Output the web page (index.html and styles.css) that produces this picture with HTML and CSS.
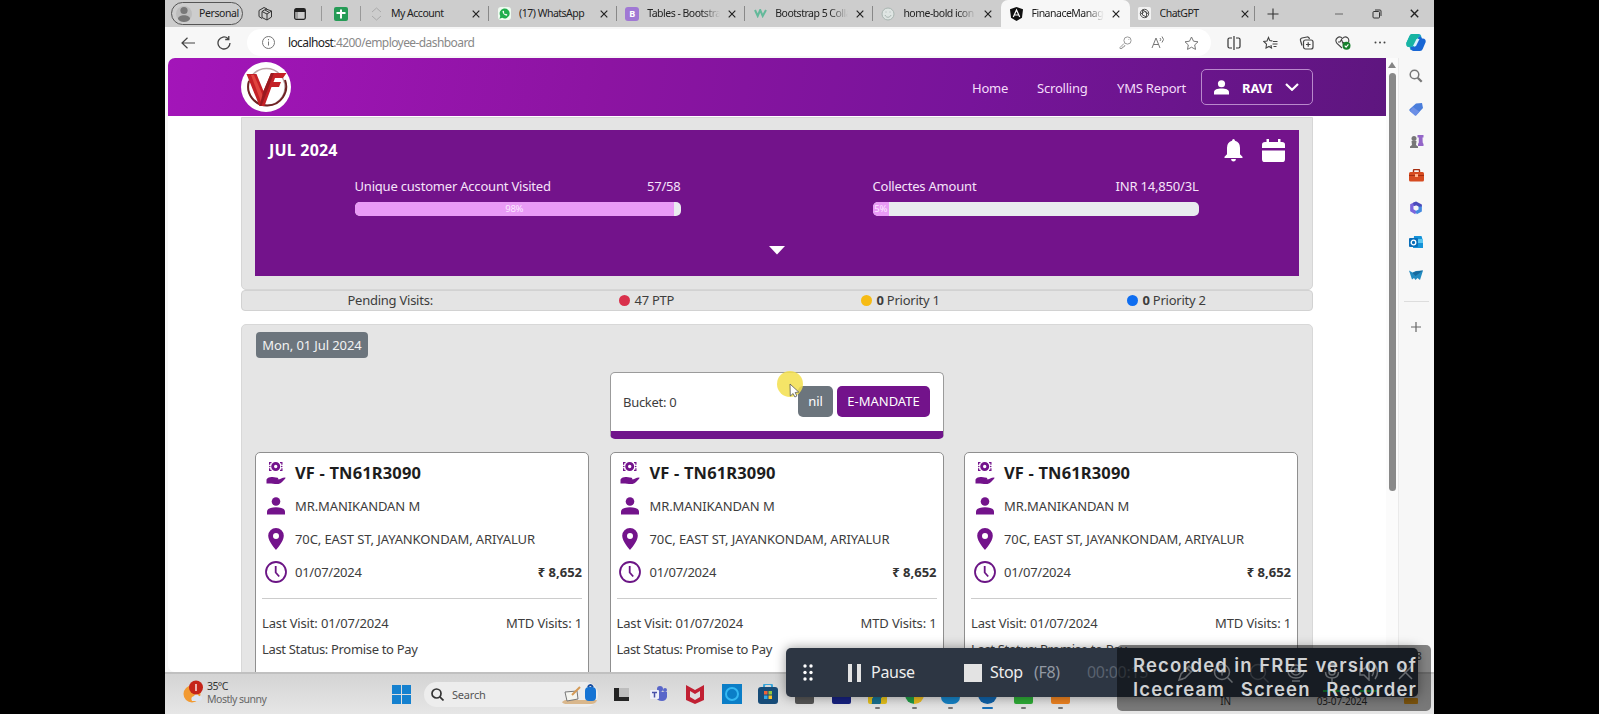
FILE: index.html
```html
<!DOCTYPE html>
<html lang="en">
<head>
<meta charset="utf-8">
<title>FinanaceManagement</title>
<link rel="stylesheet" href="styles.css">
</head>
<body>
<svg class="defs" aria-hidden="true">
  <symbol id="x" viewBox="0 0 8 8"><path d="M.7.7l6.6 6.6M7.3.7L.7 7.3" stroke="#222" stroke-width="1.2" fill="none"/></symbol>
  <symbol id="person" viewBox="0 0 18 18"><circle cx="9" cy="4.5" r="4.3"/><path d="M0 17.5v-2.8C0 11.500 4 10.200 9 10.200s9 1.300 9 4.500v2.800z"/></symbol>
  <symbol id="pin" viewBox="0 0 16 22"><path fill-rule="evenodd" d="M8 0a7.800 7.800 0 0 0-7.800 7.800C.2 13.500 8 22 8 22s7.800-8.500 7.800-14.200A7.800 7.800 0 0 0 8 0zm0 5a3 3 0 1 1 0 6 3 3 0 0 1 0-6z"/></symbol>
  <symbol id="clock" viewBox="0 0 22 22"><circle cx="11" cy="11" r="10" fill="none" stroke="#6b1585" stroke-width="1.800"/><path d="M10.700 5v6.500l3.500 4" fill="none" stroke="#6b1585" stroke-width="1.800"/></symbol>
  <symbol id="hand" viewBox="0 0 20 24"><path d="M3 1h2.500v1.200H4.200v1.600H3zM16.500 1H14v1.200h1.300v1.600h1.200zM3 10h2.500V8.800H4.200V7.200H3zM16.500 10H14V8.800h1.300V7.200h1.200z"/><path fill-rule="evenodd" d="M9.700 1a4.500 4.500 0 1 1 0 9 4.500 4.500 0 0 1 0-9zm0 2.800a1.700 1.700 0 1 0 0 3.400 1.700 1.700 0 0 0 0-3.400z"/><circle cx="3.800" cy="5.500" r=".8"/><circle cx="15.700" cy="5.500" r=".8"/><path d="M.5 18.500c1.500-2.200 3.500-2.700 6-2.500l5 .8c1 .2 1 1.400 0 1.500 2.500.3 4.500-2 7.700-1.900.6.400.2 1-.3 1.500-2 2-3.500 4.600-6.400 5-3 .6-7-.8-12-.3z"/></symbol>
</svg>
<div class="desktop">

  <div class="tabstrip">
    <div class="profile"><svg width="18" height="18" viewBox="0 0 18 18"><circle cx="9" cy="9" r="8" fill="#bdbdbd"/><circle cx="9" cy="5.500" r="3.600" fill="#787878"/><path d="M3 14c0-5 12-5 12 0-2 4-10 4-12 0z" fill="#787878"/></svg><span>Personal</span></div>
    <div class="strip-icon s1"><svg width="15" height="15" viewBox="0 0 15 15" fill="none" stroke="#333"><path d="M1 4.500l5-3 3 1.500M1 4.500v6l3 2M4 5.500l4-2.500 5.500 2v6L9 14l-5-2.500zM4 5.500l5 2.500v6M9 8l4.500-3M7 4l4 2.300"/></svg></div>
    <div class="strip-icon s2"><svg width="12" height="12" viewBox="0 0 12 12"><rect x=".7" y=".7" width="10.600" height="10.600" rx="1.500" fill="none" stroke="#222" stroke-width="1.300"/><path d="M1 1h10v3H1z" fill="#222"/><path d="M3 4v7" stroke="#777"/></svg></div>
    <div class="strip-icon s3"><svg width="14" height="14" viewBox="0 0 14 14"><rect width="14" height="14" rx="2" fill="#259b56"/><path d="M7 2.500v9M2.500 6h9" stroke="#fff" stroke-width="2"/></svg></div>
    <div class="tab"><i class="fav"><svg width="13" height="14" viewBox="0 0 13 14" fill="none" stroke="#aaa"><path d="M2 5l4.500-4L11 5M2 9l4.500 4L11 9"/></svg></i><span class="t">My Account</span><svg class="close"><use href="#x"/></svg></div>
    <div class="tab"><i class="fav"><svg width="13" height="13" viewBox="0 0 13 13"><rect width="13" height="13" rx="3" fill="#eefbf0"/><path d="M1.500 11.700l.8-2.800a5 5 0 1 1 1.900 1.900z" fill="#1fae4d"/><path d="M4.500 4c0 2.500 2 4.600 4.500 4.700l.3-1.300-1.500-.6-.6.500C6.500 7 6 6.400 5.800 5.800l.5-.6-.6-1.400z" fill="#fff"/></svg></i><span class="t">(17) WhatsApp</span><svg class="close"><use href="#x"/></svg></div>
    <div class="tab"><i class="fav"><b class="bs">B</b></i><span class="t fade">Tables - Bootstrap</span><svg class="close"><use href="#x"/></svg></div>
    <div class="tab"><i class="fav"><svg width="13" height="9" viewBox="0 0 13 9" fill="none" stroke="#63b99a" stroke-width="2"><path d="M1 1l2.700 6 2.500-6 2.500 6L12 1"/></svg></i><span class="t fade">Bootstrap 5 Colla</span><svg class="close"><use href="#x"/></svg></div>
    <div class="tab noline"><i class="fav"><svg width="14" height="14" viewBox="0 0 14 14" fill="none" stroke="#a9b5b1"><circle cx="7" cy="7" r="6" fill="#dfe5e3"/><path d="M4 8c1 3 5 3 6 0M4.500 5h1M8.500 5h1"/></svg></i><span class="t fade">home-bold icon</span><svg class="close"><use href="#x"/></svg></div>
    <div class="tab active"><i class="fav"><svg width="13" height="14" viewBox="0 0 13 14"><path d="M6.500 0L13 2.300l-1 8.400L6.500 14 1 10.700 0 2.300z" fill="#111"/><path d="M3.300 10l3.200-7 3.200 7M4.600 8h3.800" stroke="#fff" stroke-width="1.200" fill="none"/></svg></i><span class="t fade">FinanaceManagem</span><svg class="close"><use href="#x"/></svg></div>
    <div class="tab last"><i class="fav"><svg width="13" height="13" viewBox="0 0 13 13" fill="none"><rect width="13" height="13" rx="1.500" fill="#f2f2f2"/><g stroke="#555"><circle cx="6.500" cy="6.500" r="4.200"/><path d="M4.500 3v5l4 2M8.500 10V5l-4-2M2.600 7l4-2.500 4 2.500"/></g></svg></i><span class="t">ChatGPT</span><svg class="close"><use href="#x"/></svg></div>
    <div class="newtab"><svg width="12" height="12" viewBox="0 0 12 12" stroke="#333" stroke-width="1.100"><path d="M6 .5v11M.5 6h11"/></svg></div>
    <div class="winbtns">
      <svg width="10" height="10" viewBox="0 0 10 10" stroke="#666"><path d="M1 5h8"/></svg>
      <svg width="10" height="10" viewBox="0 0 10 10" stroke="#333" fill="none"><rect x="1" y="2.500" width="6.500" height="6.500" rx="1"/><path d="M3 1h5q1 0 1 1v5"/></svg>
      <svg width="9" height="9" viewBox="0 0 8 8"><use href="#x"/></svg>
    </div>
  </div>

  <div class="toolbar">
    <div class="nav-ic"><svg width="14" height="12" viewBox="0 0 14 12" fill="none" stroke="#444" stroke-width="1.200"><path d="M14 6H1M6.500 .8L1 6l5.500 5.200"/></svg></div>
    <div class="nav-ic"><svg width="14" height="14" viewBox="0 0 14 14" fill="none" stroke="#444" stroke-width="1.300"><path d="M13 7a6 6 0 1 1-2-4.500M11.800 0v3.500H8.200"/></svg></div>
    <div class="address">
      <svg width="13" height="13" viewBox="0 0 13 13" fill="none" stroke="#777"><circle cx="6.500" cy="6.500" r="6"/><path d="M6.500 5.500v4M6.500 3v1.300"/></svg>
      <span class="url"><b>localhost</b>:4200/employee-dashboard</span>
      <div class="addr-ic">
        <svg width="13" height="13" viewBox="0 0 13 13" fill="none" stroke="#999"><path d="M5 7.500L1 11.500V12.500h2l.5-1.500H5L6 9"/><circle cx="8.500" cy="4.500" r="3.600"/><path d="M9.500 3.500h.7"/></svg>
        <svg width="14" height="13" viewBox="0 0 14 13" fill="none" stroke="#777"><path d="M1 12L5 2l4 10M2.500 8.500h5M9 2q1.500 1.500 0 3M11 .5q3 3 0 6"/></svg>
        <svg width="15" height="14" viewBox="0 0 15 14" fill="none" stroke="#777"><path d="M7.500 1l2 4.200 4.500.6-3.300 3.100.8 4.500-4-2.200-4 2.200.8-4.500L1 5.800l4.500-.6z"/></svg>
      </div>
    </div>
    <div class="tools">
      <svg width="14" height="14" viewBox="0 0 14 14" fill="none" stroke="#333" stroke-width="1.200"><path d="M5 2H2.500Q1 2 1 3.500v7Q1 12 2.500 12H5M7 0v14M9 2h2.500Q13 2 13 3.500v7q0 1.500-1.500 1.500H9"/></svg>
      <svg width="15" height="14" viewBox="0 0 15 14" fill="none" stroke="#444" stroke-width="1.100"><path d="M9.500 5L6.800 4.600 5.500 1.500 4 5 .8 5.500l2.700 2.700L3 12l3-1.500 2.500 1.500-.5-3M10 5.500h4.500M9.500 8h5M10.500 10.500h3"/></svg>
      <svg width="15" height="14" viewBox="0 0 15 14" fill="none" stroke="#444" stroke-width="1.200"><path d="M3 9.500L1.500 4.500Q1 2.500 3 2l5-1q2-.3 2.500 2"/><rect x="4.500" y="4" width="9.500" height="9" rx="2"/><path d="M9.200 6.300v4.500M7 8.500h4.500"/></svg>
      <svg width="16" height="14" viewBox="0 0 16 14" fill="none" stroke="#444" stroke-width="1.100"><path d="M7 12L2 7.500Q-.5 4 2.500 1.700 5-.3 7.500 2.500 10-.3 12.500 1.700 14.500 3.500 13.500 6M3 6h2l1.500-2.500L8 7.500 9 6"/><circle cx="11.500" cy="9.700" r="4" fill="#16802c" stroke="none"/><path d="M9.700 9.700l1.400 1.500 2.300-2.800" stroke="#fff"/></svg>
      <svg width="12" height="3" viewBox="0 0 12 3" fill="#444"><circle cx="1.500" cy="1.500" r="1"/><circle cx="6" cy="1.500" r="1"/><circle cx="10.500" cy="1.500" r="1"/></svg>
      <svg width="20" height="19" viewBox="0 0 20 19"><path d="M6 1h7q1.500 0 2 1.500l.8 3H11L8 15.500Q7.500 17 6 17H4.500L3.500 14Q0 14 .3 10L3.500 3Q4.300 1 6 1z" fill="#1fa7c4"/><path d="M14 18H7.500Q5.500 18 5 16l-.5-2H9L12.300 5Q13 3.500 14.500 3.500l1.500 2Q20 5 19.700 9l-3 7Q16 18 14 18z" fill="#1866d4"/><path d="M6 1h5q1.500 0 2 1.500l-6 10L2 14Q0 13 .3 10L3.500 3Q4.300 1 6 1z" fill="#17b5a2"/><path d="M10.500 6h3l-3.500 7H7z" fill="#d9f4fb"/></svg>
    </div>
  </div>

  <div class="main">
    <div class="page">
      <nav class="navbar">
        <svg class="logo" width="50" height="50" viewBox="0 0 50 50"><circle cx="25" cy="25" r="25" fill="#fff"/><circle cx="25.500" cy="25" r="18.500" fill="none" stroke="#b9a5a8" stroke-width="1.500"/><path d="M8 19a19 19 0 1 0 36-1" fill="none" stroke="#6e2222" stroke-width="2"/><path d="M5.500 12h10l7 17L30 11h15.500l-3.500 5h-8l-1.500 4h7.500l-2 5h-7.500L23.500 44h-5z" fill="#c42127"/><path d="M13 13l9 21-2 6-10-27z" fill="#e0453f"/><path d="M22.500 29L30 11h3L20.500 44h-2z" fill="#981a20"/></svg>
        <a class="n1">Home</a><a class="n2">Scrolling</a><a class="n3">YMS Report</a>
        <button class="user"><svg width="15" height="15" fill="#fff"><use href="#person"/></svg><b>RAVI</b><svg width="14" height="8" viewBox="0 0 14 8" fill="none" stroke="#fff" stroke-width="2.200"><path d="M1 1l6 5.800L13 1"/></svg></button>
      </nav>

      <div class="content">
        <section class="summary">
          <div class="panel">
            <div class="panel-head"><h1>JUL 2024</h1>
              <svg class="bell" width="19" height="23" viewBox="0 0 19 23" fill="#fff"><path d="M9.500 0q1.300 0 1.500 1.800 5 1.400 5 7v6.500l2.500 2.500v1.200H.5v-1.200L3 15.300V8.800q0-5.600 5-7Q8.200 0 9.500 0zM7 20h5q-.3 2.500-2.500 2.500T7 20z"/></svg>
              <svg class="cal" width="23" height="23" viewBox="0 0 23 24" preserveAspectRatio="none" fill="#fff"><path d="M4.500 0H7v3h9V0h2.500v3H20q3 0 3 3v3.500H0V6q0-3 3-3h1.500zM0 12h23v9q0 3-3 3H3q-3 0-3-3z"/></svg>
            </div>
            <div class="meters">
              <div class="meter"><div class="lbl"><span>Unique customer Account Visited</span><span>57/58</span></div><div class="bar"><div class="fill" style="width:98%">98%</div></div></div>
              <div class="meter"><div class="lbl"><span>Collectes Amount</span><span>INR 14,850/3L</span></div><div class="bar"><div class="fill" style="width:5%">5%</div></div></div>
            </div>
            <svg class="caret" width="16" height="9" viewBox="0 0 16 9" fill="#fff"><path d="M0 0h16L8 8.500z"/></svg>
          </div>
        </section>
        <section class="pending">
          <span class="p0">Pending Visits:</span>
          <span class="p1"><i class="dot red"></i>47 PTP</span>
          <span class="p2"><i class="dot yellow"></i><b>0</b> Priority 1</span>
          <span class="p3"><i class="dot blue"></i><b>0</b> Priority 2</span>
        </section>
        <section class="visits">
          <span class="date">Mon, 01 Jul 2024</span>
          <div class="bucket"><span class="bk">Bucket: 0</span><span class="btn gray">nil</span><span class="btn violet">E-MANDATE</span></div>
          <div class="cards">
            <article class="card">
              <div class="row"><svg width="20" height="24"><use href="#hand"/></svg><h2>VF - TN61R3090</h2></div>
              <div class="row"><svg width="18" height="18"><use href="#person"/></svg><span class="up">MR.MANIKANDAN M</span></div>
              <div class="row"><svg width="16" height="22"><use href="#pin"/></svg><span class="up">70C, EAST ST, JAYANKONDAM, ARIYALUR</span></div>
              <div class="row"><svg width="22" height="22"><use href="#clock"/></svg><span class="due">01/07/2024</span><b>₹ 8,652</b></div>
              <hr>
              <div class="foot"><span>Last Visit: 01/07/2024</span><span>MTD Visits: 1</span></div>
              <div class="foot status"><span>Last Status: Promise to Pay</span></div>
            </article>
            <article class="card">
              <div class="row"><svg width="20" height="24"><use href="#hand"/></svg><h2>VF - TN61R3090</h2></div>
              <div class="row"><svg width="18" height="18"><use href="#person"/></svg><span class="up">MR.MANIKANDAN M</span></div>
              <div class="row"><svg width="16" height="22"><use href="#pin"/></svg><span class="up">70C, EAST ST, JAYANKONDAM, ARIYALUR</span></div>
              <div class="row"><svg width="22" height="22"><use href="#clock"/></svg><span class="due">01/07/2024</span><b>₹ 8,652</b></div>
              <hr>
              <div class="foot"><span>Last Visit: 01/07/2024</span><span>MTD Visits: 1</span></div>
              <div class="foot status"><span>Last Status: Promise to Pay</span></div>
            </article>
            <article class="card">
              <div class="row"><svg width="20" height="24"><use href="#hand"/></svg><h2>VF - TN61R3090</h2></div>
              <div class="row"><svg width="18" height="18"><use href="#person"/></svg><span class="up">MR.MANIKANDAN M</span></div>
              <div class="row"><svg width="16" height="22"><use href="#pin"/></svg><span class="up">70C, EAST ST, JAYANKONDAM, ARIYALUR</span></div>
              <div class="row"><svg width="22" height="22"><use href="#clock"/></svg><span class="due">01/07/2024</span><b>₹ 8,652</b></div>
              <hr>
              <div class="foot"><span>Last Visit: 01/07/2024</span><span>MTD Visits: 1</span></div>
              <div class="foot status"><span>Last Status: Promise to Pay</span></div>
            </article>
          </div>
        </section>
      </div>
    </div>
    <div class="scroll"><svg width="8" height="6" viewBox="0 0 8 6" fill="#858585"><path d="M4 0l4 6H0z"/></svg><div class="thumb"></div></div>
    <aside class="side">
      <svg width="14" height="14" viewBox="0 0 14 14" fill="none" stroke="#777"><circle cx="5.500" cy="5.500" r="4.300" stroke-width="1.500"/><path d="M8.700 8.700l4 4" stroke-width="2.300"/></svg>
      <svg width="14" height="14" viewBox="0 0 14 14"><path d="M7 1.500l6-.5 1 5-6.500 7q-1 1-2 0L.8 9q-1-1 0-2z" fill="#4b7edb"/><path d="M.8 9l4.700 4q1 1 2 0l3-3.200L4 5z" fill="#6c8fe6"/></svg>
      <svg width="15" height="15" viewBox="0 0 15 15"><circle cx="5" cy="4.500" r="2.500" fill="#777"/><path d="M2.500 7h5L7 11l2 1.500V14H1v-1.500L3 11z" fill="#777"/><path d="M8.500 1h6v2.500h-1l.2 5 .8 1.500v2H9v-2l.8-1.500V3.500H8.500z" fill="#9466c8"/></svg>
      <svg width="15" height="13" viewBox="0 0 15 13"><path d="M4.500 3V1.500Q4.500.5 5.500.5h4q1 0 1 1V3" fill="none" stroke="#a52d10" stroke-width="1.400"/><rect y="3" width="15" height="9.500" rx="1.500" fill="#d64b20"/><path d="M0 6.500h15" stroke="#a52d10"/><rect x="6" y="5" width="3" height="3" fill="#ffb38d"/></svg>
      <svg width="14" height="14" viewBox="0 0 14 14" fill="none" stroke-width="3.300"><path d="M7 2.300l-4.200 2v5L7 11.700" stroke="#7b65dd"/><path d="M7 11.700l4.200-2.200v-5" stroke="#4389df"/><path d="M11.200 5.500v-1L7 2.300 4.500 3.400" stroke="#4b4bbb"/></svg>
      <svg width="14" height="14" viewBox="0 0 14 14"><path d="M5 1h7.500l1.500 5v7H4z" fill="#1593d8"/><path d="M9 4h5v4H9z" fill="#5cc6f0"/><rect y="3" width="9" height="9" rx="1" fill="#096eb9"/><circle cx="4.500" cy="7.500" r="2.300" fill="none" stroke="#fff" stroke-width="1.300"/></svg>
      <svg width="14" height="12" viewBox="0 0 14 12"><path d="M0 1.500l3.500 2 3.500-1.500 7-.5-3 9.500-2.500-2-2 2L5 9l-2 1.500z" fill="#228bc1"/><path d="M3.500 4l3 3L14 1.500 7 2.500z" fill="#17699d"/></svg>
      <div class="side-line"></div>
      <svg width="10" height="10" viewBox="0 0 10 10" stroke="#666" stroke-width="1.200"><path d="M5 0v10M0 5h10"/></svg>
    </aside>
  </div>

  <div class="taskbar">
    <div class="weather"><svg width="22" height="24" viewBox="0 0 22 24"><circle cx="10" cy="14" r="8.500" fill="#f29a32"/><path d="M10 21q-2-4 2-5 2-4 5 0 4 0 3 3-1 2-4 2z" fill="#dce5f2"/><circle cx="14" cy="7.500" r="7" fill="#c52419"/><path d="M14 4v7" stroke="#fff" stroke-width="1.300"/></svg><div><span>35°C</span><span class="ms">Mostly sunny</span></div></div>
    <svg class="win" width="19" height="19" viewBox="0 0 19 19" fill="#1581cf"><path d="M0 0h9v9H0zM10 0h9v9h-9zM0 10h9v9H0zM10 10h9v9h-9z"/></svg>
    <div class="search"><svg width="13" height="13" viewBox="0 0 13 13" fill="none" stroke="#333" stroke-width="1.700"><circle cx="5.500" cy="5.500" r="4.500"/><path d="M8.800 8.800l3.700 3.700"/></svg><span>Search</span><svg width="36" height="20" viewBox="0 0 36 20"><path d="M0 18q3-3 8-2h27q-1 4-6 4H5q-4 0-5-2z" fill="#d9b78c"/><path d="M3 8l12-1 1 8-11 2z" fill="#f5f5f0" stroke="#777"/><path d="M10 11l8-8" stroke="#d59a55" stroke-width="2"/><rect x="23" y="3" width="11" height="14" rx="4" fill="#1674d4"/><path d="M26 3q2-4 5 0" stroke="#174c9c" fill="none" stroke-width="2"/></svg></div>
    <div class="apps">
      <svg width="18" height="18" viewBox="0 0 18 18"><path d="M1 3h6v6h9v7H1z" fill="#242424"/><path d="M6 3h10v9H6z" fill="#bdbdbd"/></svg>
      <svg width="18" height="18" viewBox="0 0 18 18"><circle cx="10" cy="4" r="3" fill="#5966c9"/><circle cx="15" cy="5" r="2" fill="#5966c9"/><path d="M6 7h11v5q-1 4-5 4-5 0-6-4z" fill="#5966c9"/><rect y="5" width="9" height="9" rx="1" fill="#eceef9"/><path d="M2 7.500h5M4.500 7.500v5" stroke="#4750a8" stroke-width="1.500"/></svg>
      <svg width="18" height="19" viewBox="0 0 18 19"><path d="M0 0l9 5 9-5v15l-9 4-9-4zM4 6v6l5 3 5-3V6L9 9z" fill="#c12033" fill-rule="evenodd"/></svg>
      <svg width="20" height="20" viewBox="0 0 20 20"><rect width="20" height="20" fill="#0b7ec7"/><circle cx="10" cy="10" r="6" fill="none" stroke="#35b8f2" stroke-width="2"/></svg>
      <svg width="20" height="20" viewBox="0 0 20 20"><path d="M6 4V2q0-2 2-2h4q2 0 2 2v2" fill="none" stroke="#38a5d9" stroke-width="2"/><rect y="3" width="20" height="17" rx="3" fill="#174c78"/><path d="M6 7h3.500v3.500H6z" fill="#ef6339"/><path d="M10.500 7H14v3.500h-3.500z" fill="#92c63f"/><path d="M6 11.500h3.500V15H6z" fill="#32a8e8"/><path d="M10.500 11.500H14V15h-3.500z" fill="#f9c229"/></svg>
      <i class="app a1"></i><i class="app a2"></i><i class="app a3 run"></i><i class="app a4 run"></i><i class="app a5 run"></i><i class="app a6 run on"></i><i class="app a7 run"></i><i class="app a8 run"></i>
    </div>
    <div class="tray"><span>IN</span><span>03-07-2024</span><i class="badge"></i></div>
  </div>
</div>

<svg class="pointer" width="28" height="32" viewBox="0 0 28 32"><circle cx="13" cy="13" r="13" fill="#f3df4c" fill-opacity=".85"/><path d="M13 13l.3 12 2.800-2.500 1.800 3.500 2-1-1.700-3.500 3.500-.5z" fill="#fff" stroke="#555" stroke-width=".8"/></svg>

<div class="recorder">
  <svg class="grip" width="10" height="17" viewBox="0 0 10 17" fill="#fff"><circle cx="2" cy="2" r="1.700"/><circle cx="8" cy="2" r="1.700"/><circle cx="2" cy="8.500" r="1.700"/><circle cx="8" cy="8.500" r="1.700"/><circle cx="2" cy="15" r="1.700"/><circle cx="8" cy="15" r="1.700"/></svg>
  <svg class="pause" width="13" height="18" viewBox="0 0 13 18" fill="#e3e3e3"><path d="M0 0h4v18H0zM9 0h4v18H9z"/></svg>
  <span class="rp">Pause</span>
  <i class="stop"></i>
  <span class="rs">Stop</span><span class="f8">(F8)</span><span class="time">00:00:15</span>
  <div class="rec-tools">
    <svg width="18" height="18" viewBox="0 0 18 18"><path d="M2 16l2-6 8-8 4 4-8 8zM10 4l4 4M2 16l4-1"/></svg>
    <svg width="20" height="20" viewBox="0 0 20 20"><circle cx="9" cy="9" r="7.500"/><path d="M14.500 14.500l5 5M5.500 9h7M9 5.500v7"/></svg>
    <svg class="dim" width="20" height="20" viewBox="0 0 20 20"><circle cx="9" cy="9" r="7.500"/><path d="M14.500 14.500l5 5"/></svg>
    <svg width="20" height="18" viewBox="0 0 20 18"><circle cx="10" cy="6" r="5"/><circle cx="10" cy="6" r="1.500"/><path d="M2 8q1 6 8 6t8-6M6 17h8"/></svg>
    <div class="mic"><svg width="16" height="20" viewBox="0 0 16 20"><rect x="5" y="1" width="6" height="11" rx="3"/><path d="M1.500 9q0 6 6.500 6t6.500-6M8 15v4"/></svg><i class="level"></i></div>
    <div class="mic"><svg width="20" height="18" viewBox="0 0 20 18"><path d="M1 6h4l5-5v16l-5-5H1zM13 5q3 4 0 8M16 2q5 7 0 14"/></svg><i class="level"></i></div>
    <svg width="15" height="15" viewBox="0 0 15 15"><path d="M1 1l13 13M14 1L1 14"/></svg>
  </div>
</div>
<span class="clock-digit">8</span>
<div class="watermark"><span>Recorded in FREE version of</span><span>Icecream Screen Recorder</span></div>
</body>
</html>
```
FILE: styles.css
```css
* { box-sizing: border-box; }
body { margin: 0; width: 1599px; height: 714px; overflow: hidden; background: #000; position: relative; font-family: "Noto Sans", "Open Sans", sans-serif; font-size: 13px; color: #3d3d3d; white-space: nowrap; }
svg { display: block; flex: none; }
span, b, h1, h2, a, button, i { flex: none; }
.defs { width: 0; height: 0; position: absolute; }
.desktop { margin-left: 165px; width: 1269px; height: 714px; display: flex; flex-direction: column; background: #f7f7f7; overflow: hidden; }

/* browser tabs */
.tabstrip { height: 27px; background: #cdcdcd; display: flex; align-items: center; font-size: 10.500px; color: #222; flex: none; }
.tabstrip span { padding-bottom: 2px; }
.profile { margin-left: 6px; width: 72px; height: 23px; border: 1.500px solid #555; border-radius: 12px; display: flex; align-items: center; gap: 6px; padding-left: 3px; letter-spacing: -.4px; }
.strip-icon { display: flex; justify-content: center; width: 34px; }
.s1 { margin-left: 5px; }
.s2 { width: 36px; }
.s3 { width: 40px; height: 15px; margin-left: 3px; border: solid #999; border-width: 0 1px; align-items: center; }
.tab { width: 128.100px; height: 27px; display: flex; align-items: center; background: linear-gradient(#888, #888) right 6px / 1px 15px no-repeat; }
.tab.noline { background: none; }
.tab .fav { width: 30px; display: flex; justify-content: center; font-style: normal; }
.tab .t { width: 73px; overflow: hidden; letter-spacing: -.5px; }
.tab .fade { mask-image: linear-gradient(90deg, #000 75%, transparent); }
.close { width: 8px; height: 8px; margin-left: 8px; }
.tab.active { background: #f7f7f7; border-radius: 7px 7px 0 0; }
.tab.last { width: 125px; }
.bs { width: 14px; height: 14px; border-radius: 3px; background: #a078d4; color: #fff; font-size: 9px; line-height: 14px; text-align: center; }
.newtab { width: 36px; display: flex; justify-content: center; }
.winbtns { margin-left: 43px; display: flex; gap: 28px; align-items: center; }

/* address bar */
.toolbar { height: 31px; display: flex; align-items: center; padding-left: 5px; background: #f7f7f7; flex: none; }
.nav-ic { width: 36px; display: flex; justify-content: center; }
.address { margin-left: 5px; width: 966px; height: 27px; background: #fff; border-radius: 14px; display: flex; align-items: center; padding-left: 15px; }
.url { margin-left: 13px; font-size: 12px; color: #888; letter-spacing: -.58px; padding-bottom: 1px; }
.url b { font-weight: 400; color: #222; }
.addr-ic { margin-left: auto; display: flex; padding-right: 3px; }
.addr-ic svg { margin: 0 9.500px; }
.tools { display: grid; grid-template-columns: repeat(6, 36.300px); justify-items: center; align-items: center; margin-left: 5px; }

.main { height: 614px; display: flex; flex: none; }
.page { margin-left: 3px; width: 1218px; background: #fff; border-radius: 7px 0 0 7px; overflow: hidden; }
.scroll { width: 12px; display: flex; flex-direction: column; align-items: center; padding-top: 4px; background: #fbfbfb; }
.thumb { width: 7px; height: 418px; border-radius: 4px; background: #898989; margin-top: 5px; }
.side { width: 35px; border-left: 1px solid #eaeaea; display: grid; grid-template-rows: repeat(7, 33.200px) 20px 32px; align-content: start; justify-items: center; align-items: center; padding-top: 1px; }
.side-line { width: 25px; height: 1px; background: #ddd; }

/* application header */
.navbar { height: 58px; display: flex; align-items: center; padding-left: 73px; background: linear-gradient(100deg, #a315b9, #8c14a2 36%, #77149a 66%, #5e167f); color: #f4dcfa; }
.navbar a { letter-spacing: -.2px; padding-top: 1px; }
.n1 { margin-left: 681px; width: 65px; }
.n2 { width: 80px; }
.n3 { width: 84px; }
.user { width: 112px; height: 36px; border: 1px solid #b989cc; border-radius: 5px; background: none; display: flex; align-items: center; padding: 0 0 0 12px; color: #fff; font: 13px "Noto Sans", sans-serif; letter-spacing: -.1px; }
.user b { margin-left: 13px; width: 43px; text-align: left; padding-top: 1px; }

/* dashboard */
.content { margin-left: 73px; width: 1072px; display: flex; flex-direction: column; }
.summary { height: 173px; margin-top: 1px; background: #e4e4e4; border: 1px solid #d6d6d6; border-radius: 0 0 5px 5px; padding: 12px 13px; }
.panel { height: 146px; background: #73138b; color: #f6e3fa; display: flex; flex-direction: column; }
.panel-head { display: flex; align-items: center; padding: 8px 14px 0 14px; height: 32px; }
h1 { margin: 0; font-size: 16px; letter-spacing: .2px; color: #fff; line-height: 20px; }
.bell { margin-left: auto; }
.cal { margin-left: 19px; }
.meters { display: flex; gap: 192px; padding: 14px 0 0 99.500px; }
.meter { width: 326px; }
.lbl { display: flex; justify-content: space-between; line-height: 20px; letter-spacing: -.2px; }
.bar { height: 14px; margin-top: 6px; background: #e9ecef; border-radius: 5px; overflow: hidden; }
.fill { height: 14px; background: #e99af6; color: #fbe9ff; font-size: 9.500px; line-height: 13px; letter-spacing: -.3px; text-align: center; }
.caret { margin: 30px auto 0; }
.pending { height: 21px; background: #e4e4e4; border: 1px solid #d2d2d2; border-radius: 4px; display: flex; align-items: center; padding: 0 0 1px 105.500px; }
.pending span { display: flex; align-items: center; letter-spacing: -.25px; white-space: pre; }
.p0 { width: 271px; }
.p1 { width: 242px; }
.p2 { width: 266px; }
.dot { width: 11px; height: 11px; border-radius: 50%; margin-right: 5px; }
.red { background: #d9304b; }
.yellow { background: #f6bb14; }
.blue { background: #0e6df0; }
.visits { margin-top: 13px; height: 400px; background: #e5e5e5; border: 1px solid #d8d8d8; border-radius: 5px; padding: 7px 13px; }
.date { display: block; width: 112px; height: 26px; margin-left: 1px; border-radius: 4px; background: #6c757d; color: #f2f2f2; line-height: 26px; text-align: center; letter-spacing: -.1px; }
.bucket { margin: 14px auto 0; width: 334px; height: 67px; background: #fff; border: 1px solid #9b9b9b; border-bottom: 8px solid #70148b; border-radius: 5px; display: flex; align-items: center; padding: 0 13px 1px 12px; }
.bk { margin-right: auto; letter-spacing: -.3px; }
.btn { height: 31px; line-height: 31px; border-radius: 5px; color: #fff; text-align: center; margin-left: 4px; }
.gray { background: #6c757d; width: 35px; }
.violet { background: #73138b; width: 93px; }
.cards { margin-top: 13px; display: grid; grid-template-columns: repeat(3, 334px); gap: 20.500px; }
.card { height: 260px; background: #fff; border: 1px solid #8f8f8f; border-radius: 5px; padding: 3px 6px; }
.row { display: grid; grid-template-columns: 27px 1fr auto; column-gap: 6px; align-items: center; height: 33px; fill: #73138b; }
.row svg { justify-self: center; }
.row b { color: #333; }
h2 { font-size: 16.500px; margin: 0; color: #1d1d1d; letter-spacing: .15px; }
.up { letter-spacing: -.1px; }
.due { letter-spacing: -.25px; }
hr { border: 0; border-top: 1px solid #ccc; margin: 10px 0 11px; }
.foot { display: flex; justify-content: space-between; height: 26px; line-height: 26px; letter-spacing: -.15px; }
.status { letter-spacing: -.33px; }

/* desktop taskbar */
.taskbar { height: 42px; flex: none; border-top: 2px solid #c0c0c0; background: linear-gradient(#d4d4d4, #e6e6e6); display: flex; align-items: center; }
.weather { width: 227px; padding: 0 0 2px 17px; display: flex; gap: 3px; font-size: 10.500px; line-height: 13px; letter-spacing: -.6px; color: #333; }
.weather div { display: flex; flex-direction: column; }
.weather .ms { letter-spacing: -.5px; color: #666; }
.search { margin-left: 13px; width: 174px; height: 25px; border-radius: 13px; background: #ededed; display: flex; align-items: center; padding-left: 7px; font-size: 11px; color: #555; letter-spacing: -.2px; }
.search span { margin-left: 8px; margin-right: auto; }
.apps { margin-left: 6px; display: grid; grid-template-columns: repeat(13, 36.500px); justify-items: center; align-items: center; }
.app { width: 19px; height: 19px; border-radius: 2px; }
.a1 { background: #555; }
.a2 { background: #17227f; }
.a3 { background: linear-gradient(100deg, #e3bf1b 30%, #19708f 31% 70%, #e3bf1b 71%); }
.a4 { background: linear-gradient(90deg, #1f9a45 45%, #e9ba22 46%); border-radius: 50%; }
.a5 { background: #1682c5; border-radius: 7px; }
.a6 { background: #1062a8; border-radius: 50%; }
.a7 { background: #2eaa36; }
.a8 { background: #ec8221; }
.run::after { content: ""; display: block; width: 5px; height: 2px; border-radius: 1px; background: #777; margin: 22px auto 0; }
.on::after { width: 11px; background: #176fb8; }
.tray { margin-left: auto; align-self: flex-end; display: flex; align-items: center; padding: 0 16px 6px 0; font-size: 10px; letter-spacing: -.2px; color: #333; }
.tray span + span { margin-left: 86px; }
.badge { width: 14px; height: 6px; margin-left: 37px; background: #e59b19; border-radius: 1px; }

/* screen overlays */
.pointer { position: absolute; left: 777px; top: 371px; }
.recorder { position: absolute; left: 786px; top: 648px; width: 632px; height: 49px; border-radius: 5px; background: #2d3643; box-shadow: 0 0 12px rgba(0, 0, 0, .4); display: flex; align-items: center; color: #eee; font-size: 16px; letter-spacing: -.3px; }
.recorder span { padding-bottom: 1px; }
.grip { margin-left: 17px; }
.pause { margin-left: 35px; }
.rp { margin-left: 10px; width: 93px; }
.stop { width: 18px; height: 18px; background: #e3e3e3; }
.rs { margin-left: 8px; width: 44px; }
.f8 { color: #9299a3; width: 53px; }
.time { color: #59626f; width: 64px; }
.rec-tools { margin-left: 17px; display: grid; grid-template-columns: repeat(7, 36.500px); align-items: center; justify-items: center; fill: none; stroke: #bfc6cf; stroke-width: 1.500; }
.dim { opacity: .35; }
.mic { height: 38px; display: flex; flex-direction: column; justify-content: space-between; align-items: center; padding-top: 9px; }
.level { width: 18px; height: 2px; background: #18a83c; }
.clock-digit { position: absolute; left: 1416px; top: 649px; font-size: 10px; color: #333; }
.watermark { position: absolute; left: 1117px; top: 645px; width: 314px; height: 66px; border-radius: 5px; background: rgba(0, 0, 0, .47); padding: 8px 14px 0 16px; color: #d0d2d4; font: 600 18.500px/24px "Inter", sans-serif; letter-spacing: 1.150px; }
.watermark span { display: block; text-align-last: justify; }
```
